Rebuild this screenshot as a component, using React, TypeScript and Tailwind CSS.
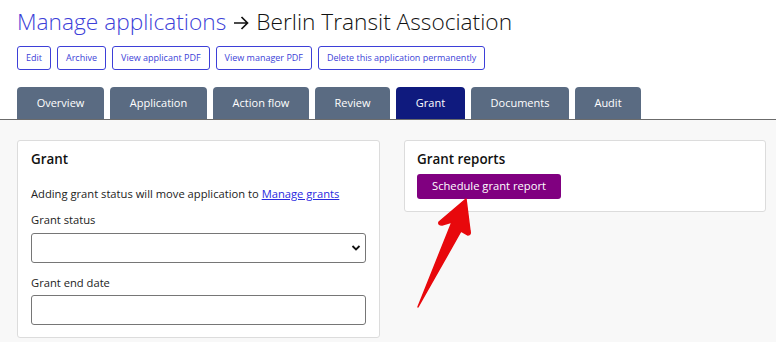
import React from "react";

const actions = [
  "Edit",
  "Archive",
  "View applicant PDF",
  "View manager PDF",
  "Delete this application permanently",
];

const tabs = [
  { label: "Overview", w: "w-[87px]" },
  { label: "Application", w: "w-[97px]" },
  { label: "Action flow", w: "w-[96px]" },
  { label: "Review", w: "w-[75px]" },
  { label: "Grant", w: "w-[69px]", active: true },
  { label: "Documents", w: "w-[98px]" },
  { label: "Audit", w: "w-[66px]" },
];

const Arrow = () => (
  <svg
    className="pointer-events-none absolute left-0 top-0"
    width="776"
    height="342"
    viewBox="0 0 776 342"
  >
    <path
      d="M466 199 L439 222 Q438 225 442 225 L452 222 L418 307 L461 231 L468 235 Q471 235 470 231 Z"
      fill="#e8080c"
      stroke="#e8080c"
      strokeLinejoin="round"
      strokeWidth="1.5"
    />
  </svg>
);

export default function App() {
  return (
    <div className="relative h-[342px] w-[776px] overflow-hidden bg-white font-['Open_Sans',sans-serif]">
      <div className="px-[17px] pt-[6px]">
        <h1 className="flex items-center text-[22.7px] font-light leading-[32px] text-[#111]">
          <span className="text-[#3d3fd8]">Manage applications</span>
          <svg className="mx-[7px] mt-[1px]" width="16" height="14" viewBox="0 0 16 14">
            <path
              d="M1 7 H14.5 M8.5 1 L14.5 7 L8.5 13"
              fill="none"
              stroke="#111"
              strokeWidth="1.7"
            />
          </svg>
          <span>Berlin Transit Association</span>
        </h1>

        <div className="mt-[8px] flex gap-[6px]">
          {actions.map((a) => (
            <button
              key={a}
              className="h-[24px] rounded-[3px] border border-[#3d3fd8] bg-white px-[8px] text-[9px] text-[#3d3fd8]"
            >
              {a}
            </button>
          ))}
        </div>

        <div className="mt-[17px] flex gap-[6px]">
          {tabs.map((t) => (
            <div
              key={t.label}
              className={`flex h-[32px] items-center justify-center rounded-t-[4px] text-[11px] text-white ${t.w} ${
                t.active ? "bg-[#0f1a7e]" : "bg-[#5a6b82]"
              }`}
            >
              {t.label}
            </div>
          ))}
        </div>
      </div>

      <div className="h-full border-t border-[#6b6b6b] bg-[#f8f8f8] pl-[17px] pr-[10px] pt-[20px]">
        <div className="flex items-start gap-[24px]">
          <div className="w-[363px] rounded-[3px] border border-[#dcdcdc] bg-white px-[13px] pb-[12px] pt-[8px]">
            <h2 className="text-[13.4px] font-semibold leading-[20px] text-[#111]">
              Grant
            </h2>
            <p className="mt-[16px] text-[11.2px] leading-[18px] text-[#222]">
              Adding grant status will move application to{" "}
              <a className="text-[#2a2ae0] underline">Manage grants</a>
            </p>
            <label className="mt-[8px] block text-[11.2px] leading-[18px] text-[#222]">
              Grant status
            </label>
            <div className="mt-[4px] flex h-[30px] items-center justify-end rounded-[3px] border border-[#767676] pr-[4px]">
              <svg width="10" height="8" viewBox="0 0 10 8">
                <path
                  d="M1.5 2 L5 5.5 L8.5 2"
                  fill="none"
                  stroke="#111"
                  strokeWidth="1.8"
                />
              </svg>
            </div>
            <label className="mt-[11px] block text-[11.2px] leading-[18px] text-[#222]">
              Grant end date
            </label>
            <div className="mt-[3px] h-[30px] rounded-[3px] border border-[#767676]" />
          </div>

          <div className="w-[362px] rounded-[3px] border border-[#dcdcdc] bg-white px-[12px] pb-[12px] pt-[8px]">
            <h2 className="text-[13.4px] font-semibold leading-[20px] text-[#111]">
              Grant reports
            </h2>
            <button className="mt-[5px] h-[25px] rounded-[3px] bg-[#800080] px-[15px] text-[11.2px] text-white">
              Schedule grant report
            </button>
          </div>
        </div>
      </div>

      <Arrow />
    </div>
  );
}
